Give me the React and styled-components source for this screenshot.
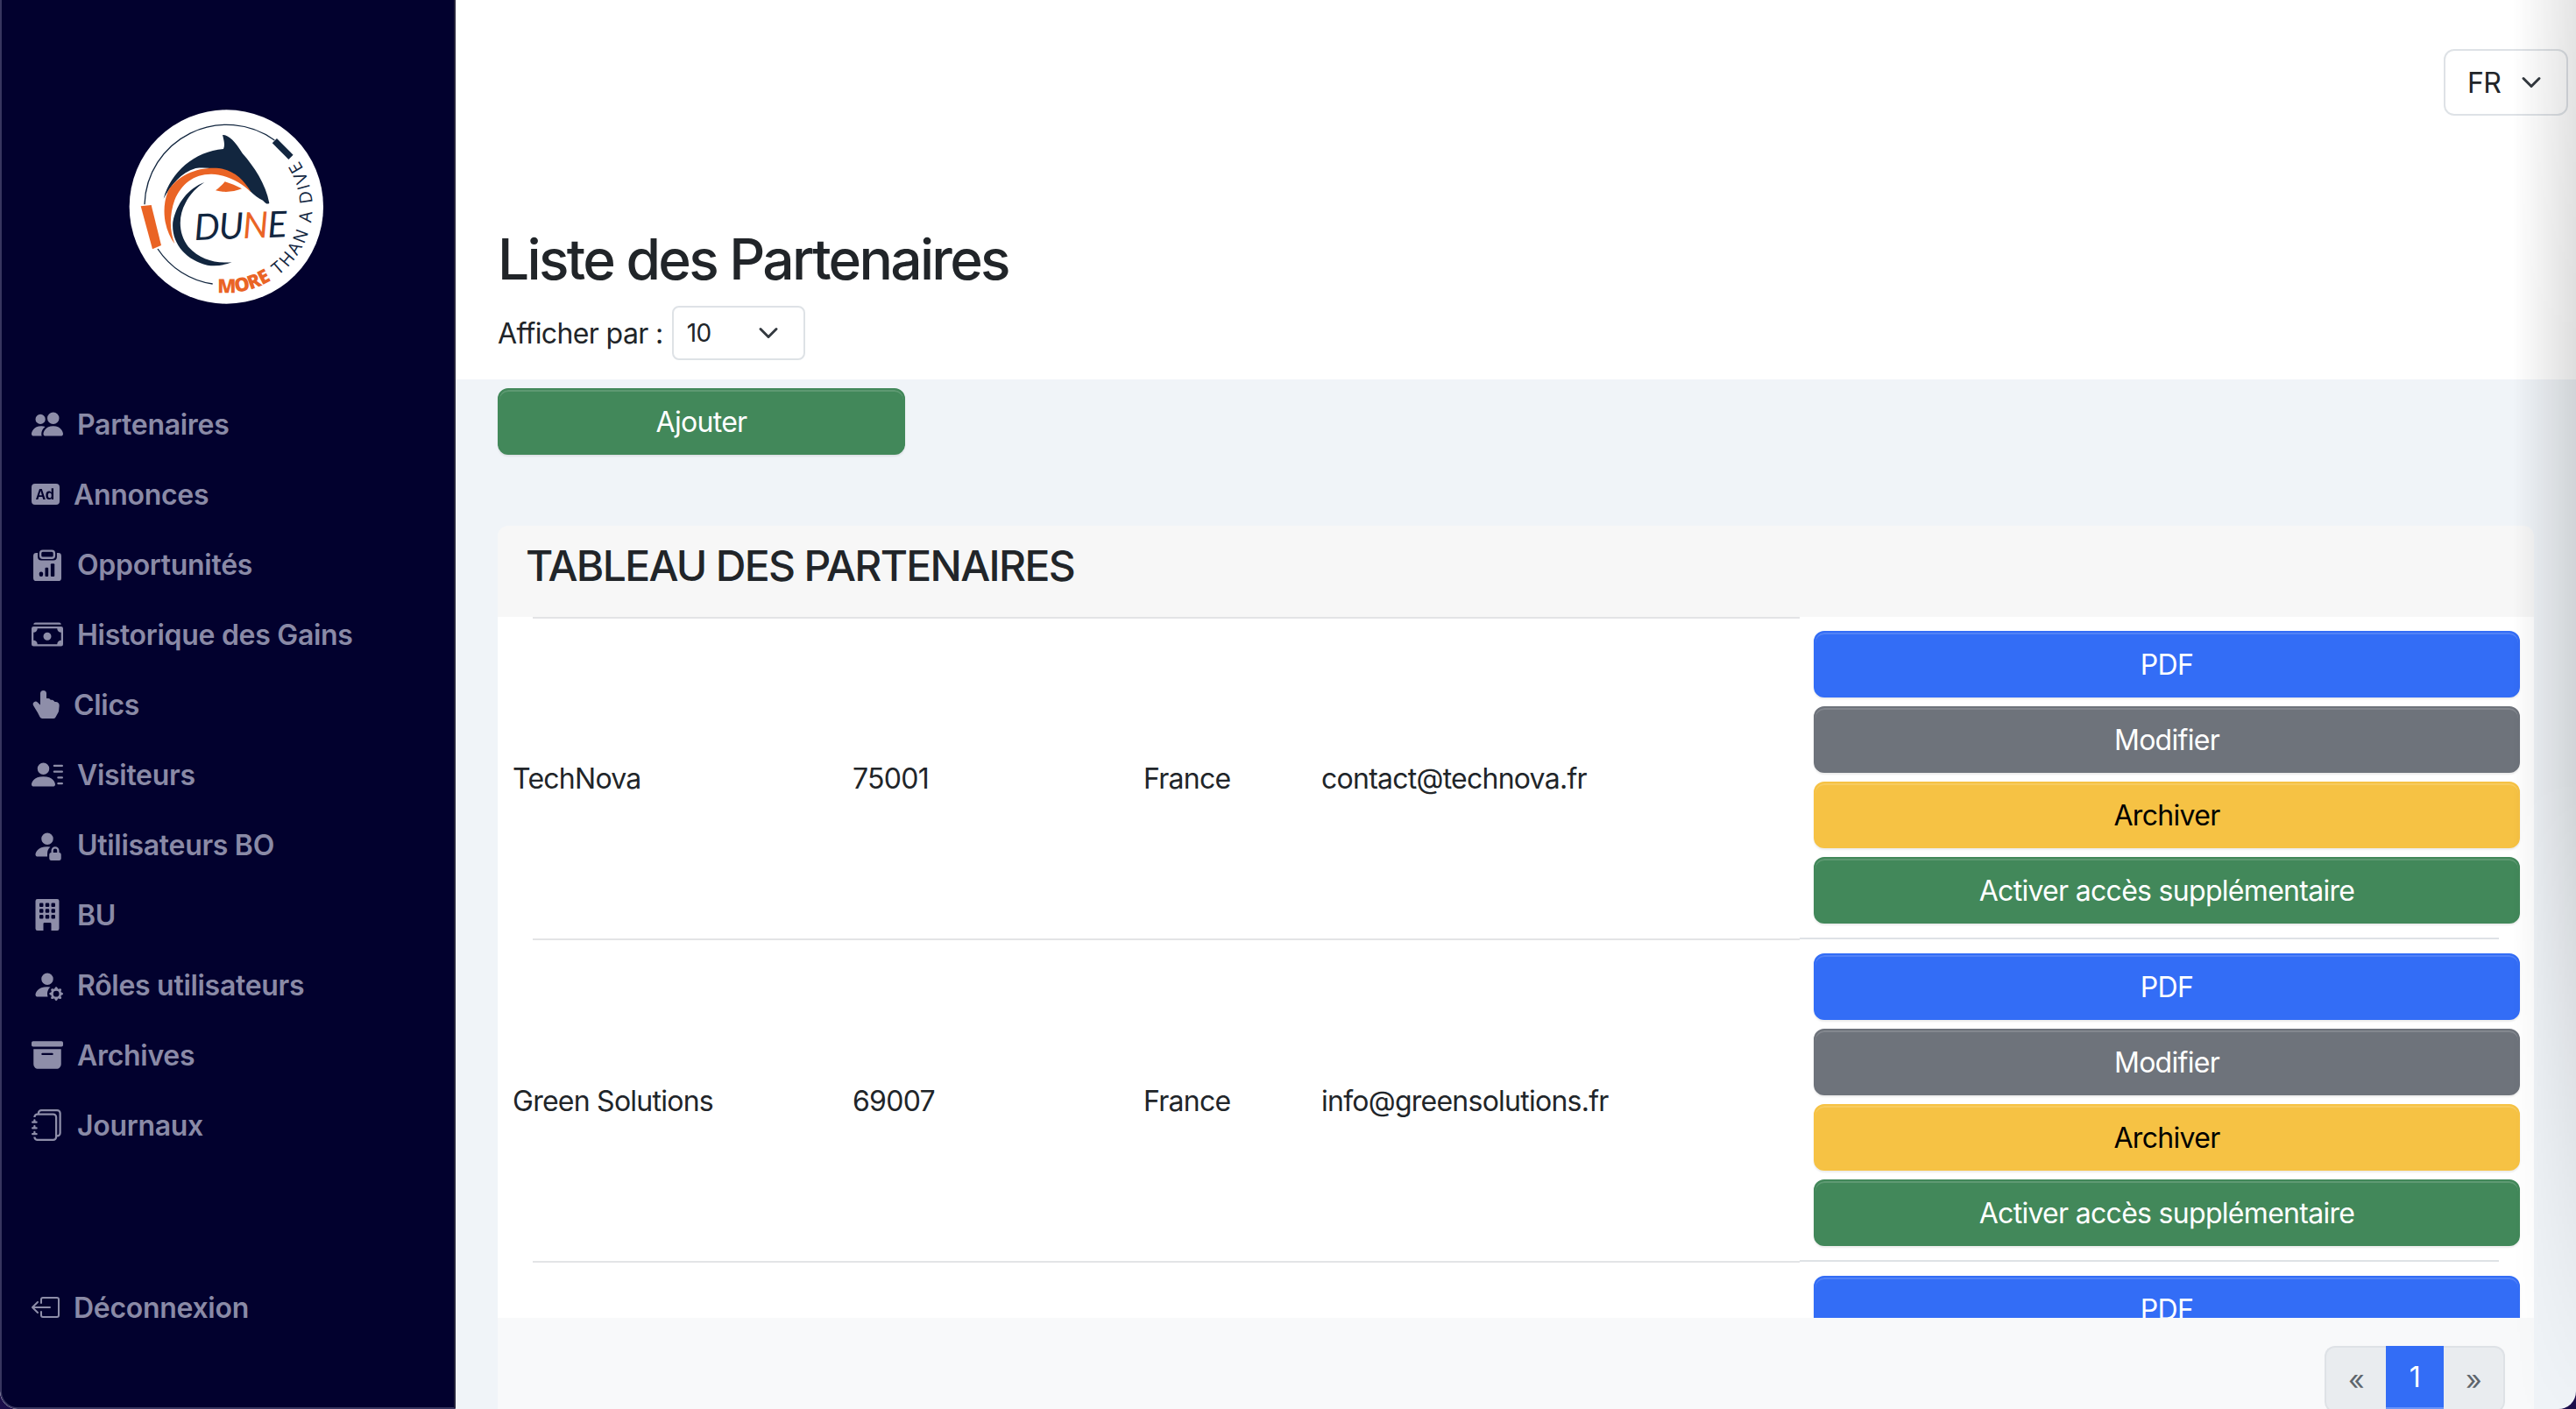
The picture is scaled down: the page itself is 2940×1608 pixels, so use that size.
import React from "react";
import styled, { createGlobalStyle } from "styled-components";
import {
  BsPeopleFill, BsBadgeAdFill, BsCashStack, BsHandIndexThumbFill,
  BsPersonLinesFill, BsPersonFillLock, BsBuildingFill, BsPersonFillGear, BsArchiveFill,
  BsJournals, BsBoxArrowLeft,
} from "react-icons/bs";

const Global = createGlobalStyle`
  html, body { margin: 0; padding: 0; background: #1b0d4a; }
  * { box-sizing: border-box; }
  body { font-family: Inter, "Liberation Sans", sans-serif; font-size: 32px; color: #212529; letter-spacing: -0.75px; }
`;

const Frame = styled.div`
  position: relative;
  display: flex;
  width: 2940px;
  height: 1608px;
  overflow: hidden;
  background: #f0f4f8;
  border-radius: 0 0 20px 20px;
`;
const Sidebar = styled.aside`
  flex: 0 0 520px;
  display: flex;
  flex-direction: column;
  padding: 90px 0 74px 34px;
  background: #02012e;
  border-left: 2px solid #37355f;
  border-right: 2px solid #25243c;
  border-bottom: 2px solid #37355f;
  border-bottom-left-radius: 20px;
`;
const Logo = styled.svg`
  display: block;
  width: 320px;
  height: 300px;
  margin: 0 0 54px 64px;
  flex: none;
`;
const Nav = styled.nav`
  display: flex;
  flex-direction: column;
`;
const NavItem = styled.a`
  display: flex;
  align-items: center;
  gap: 16px;
  height: 80px;
  color: #8a8aa6;
  font-weight: 600;
  font-size: 32px;
  letter-spacing: -0.3px;
`;
const Logout = styled(NavItem)`
  margin-top: auto;
`;
const IconBox = styled.span`
  display: flex;
  align-items: center;
  justify-content: center;
  flex: none;
  width: ${(p) => p.$w}px;
  color: #8e8ea9;
`;
const Main = styled.main`
  flex: 1;
  min-width: 0;
  display: flex;
  flex-direction: column;
`;
const Head = styled.header`
  flex: none;
  height: 433px;
  padding: 56px 9px 0 48px;
  background: #fff;
`;
const LangRow = styled.div`
  display: flex;
  justify-content: flex-end;
  height: 76px;
`;
const SelectBox = styled.div`
  display: flex;
  align-items: center;
  justify-content: space-between;
  width: ${(p) => p.$w}px;
  height: ${(p) => p.$h}px;
  padding: ${(p) => p.$pad};
  font-size: ${(p) => p.$fs}px;
  background: #fff;
  border: 2px solid #dee2e6;
  border-radius: ${(p) => p.$r}px;
`;
const Title = styled.h1`
  margin: 125px 0 15px;
  font-size: 64px;
  line-height: 77px;
  font-weight: 500;
  letter-spacing: -2.7px;
`;
const FilterRow = styled.div`
  display: flex;
  align-items: center;
  gap: 10px;
  height: 62px;
  letter-spacing: -0.62px;
`;
const Body = styled.div`
  flex: 1;
  min-height: 0;
  padding: 10px 48px 0;
`;
const Btn = styled.button`
  display: block;
  width: ${(p) => p.$w || "100%"};
  height: 76px;
  flex: none;
  padding: 0;
  font: 400 32px Inter, "Liberation Sans", sans-serif;
  letter-spacing: -0.7px;
  color: ${(p) => p.$fg || "#fff"};
  background: ${(p) => p.$bg};
  border: 2px solid ${(p) => p.$bg};
  border-radius: 12px;
  box-shadow: inset 0 2px 0 rgba(255, 255, 255, 0.15), 0 2px 2px rgba(0, 0, 0, 0.075);
`;
const Card = styled.section`
  margin-top: 81px;
  border-radius: 12px 12px 0 0;
  overflow: hidden;
`;
const CardHead = styled.div`
  display: flex;
  align-items: center;
  height: 104px;
  padding: 0 32px 12px;
  background: #f7f7f7;
`;
const CardTitle = styled.h2`
  margin: 0;
  font-size: 48px;
  font-weight: 500;
  line-height: 1.2;
  letter-spacing: -1.68px;
`;
const TableArea = styled.div`
  height: 800px;
  overflow: hidden;
  background: #fff;
`;
const Row = styled.div`
  display: grid;
  grid-template-columns: 388px 332px 203px 546px 838px;
  align-items: center;
  height: 366px;
  padding-left: 17px;
`;
const Cell = styled.div`
  white-space: nowrap;
  padding-top: 2px;
`;
const Actions = styled.div`
  display: flex;
  flex-direction: column;
  gap: 10px;
  padding: 0 16px;
`;
const Divider = styled.div`
  display: flex;
  height: 2px;
  margin-bottom: ${(p) => (p.$top ? "-2px" : 0)};
  padding-left: 40px;
  position: relative;
`;
const RuleLeft = styled.div`
  width: 1446px;
  height: 2px;
  margin-top: ${(p) => (p.$top ? 0 : 1)}px;
  background: #e3e4e6;
`;
const RuleRight = styled.div`
  width: 798px;
  height: 2px;
  background: #dee2e6;
`;
const CardFoot = styled.div`
  display: flex;
  justify-content: flex-end;
  height: 120px;
  padding: 32px 33px 0 0;
  background: #f8f9fa;
`;
const Pager = styled.div`
  display: flex;
  height: 76px;
  flex: none;
`;
const PageLink = styled.span`
  display: flex;
  align-items: center;
  justify-content: center;
  width: ${(p) => p.$w}px;
  background: ${(p) => (p.$active ? "#336df6" : "#e9ecef")};
  color: ${(p) => (p.$active ? "#fff" : "#5f666d")};
  border: 2px solid #dee2e6;
  border-width: ${(p) => p.$bw};
  border-radius: ${(p) => p.$r};
  ${(p) => p.$active && "border: 0; border-bottom: 6px solid #6b95f8;"}
`;
const EdgeShade = styled.div`
  position: absolute;
  top: 0;
  right: 0;
  bottom: 0;
  width: 72px;
  background: linear-gradient(to right, rgba(0, 0, 0, 0), rgba(0, 0, 0, 0.13));
  -webkit-mask-image: linear-gradient(to bottom, rgba(0,0,0,0.8) 0, #000 25%, #000 55%, rgba(0,0,0,0.05) 100%);
  mask-image: linear-gradient(to bottom, rgba(0,0,0,0.8) 0, #000 25%, #000 55%, rgba(0,0,0,0.05) 100%);
  pointer-events: none;
`;

const Chevron = () => (
  <svg width="32" height="24" viewBox="0 0 16 16" fill="none" stroke="#343a40" strokeWidth="2" strokeLinecap="round" strokeLinejoin="round">
    <path d="m2 5 6 6 6-6" />
  </svg>
);

const ClipboardBars = () => (
  <svg width="32" height="37" viewBox="115 555 95 110">
    <rect x="115" y="570" width="95" height="95" rx="10" fill="currentColor" />
    <rect x="130" y="555" width="65" height="40" rx="12" fill="#02012e" />
    <rect x="139" y="563" width="47" height="24" rx="8" fill="#02012e" stroke="currentColor" strokeWidth="7" />
    <rect x="135" y="634" width="13" height="16" rx="6" fill="#02012e" />
    <rect x="155" y="620" width="11" height="30" rx="3" fill="#02012e" />
    <rect x="174" y="606" width="13" height="44" rx="3" fill="#02012e" />
  </svg>
);

const DARK = "#12263f";
const ORANGE = "#ea6425";

const DuneLogo = () => (
  <Logo viewBox="0 0 960 900">
    <circle cx="475" cy="438" r="332" fill="#fff" />
    <path d="M195 430A281 281 0 0 1 640 210" fill="none" stroke={DARK} strokeWidth="4" />
    <path d="M640 212L696 268" fill="none" stroke={DARK} strokeWidth="22" />
    <path d="M182 436L218 432L252 570L222 583Z" fill={ORANGE} />
    <path d="M240 582A272 272 0 0 0 428 702" fill="none" stroke={DARK} strokeWidth="4" />
    <path d="M260 410C285 320 365 248 465 240C472 225 465 205 462 192C485 192 505 215 530 255C570 300 610 360 622 425C616 432 608 425 600 416C585 410 570 398 556 384C505 325 440 298 370 306C320 320 285 365 260 410Z" fill={DARK} />
    <path d="M298 565C265 520 250 450 275 385C310 325 385 300 450 306C500 312 535 345 560 388C525 355 480 328 425 326C365 325 320 360 298 415C280 465 280 520 298 565Z" fill={ORANGE} />
    <path d="M438 382C450 372 462 362 470 352C490 358 510 366 528 376C500 388 465 390 438 382Z" fill={ORANGE} />
    <path d="M400 354C345 375 305 425 292 490C285 560 335 620 410 638C440 642 470 638 494 628C440 632 385 620 345 575C310 530 310 470 335 425C350 395 375 370 400 354Z" fill={DARK} />
    <text x="366" y="552" fontFamily="Lato, sans-serif" fontStyle="italic" fontWeight="400" fontSize="124" letterSpacing="-3" fill={DARK} transform="rotate(-2 366 552)">
      DU<tspan fill={ORANGE}>N</tspan>E
    </text>
    <path id="moreArc" d="M445 731A294 294 0 0 0 650 675" fill="none" />
    <text fontFamily="'Open Sans', sans-serif" fontSize="66" fontWeight="800" fill={ORANGE} letterSpacing="-2">
      <textPath href="#moreArc">MORE</textPath>
    </text>
    <path id="diveArc" d="M652 673A294 294 0 0 0 715 268" fill="none" />
    <text fontFamily="'Open Sans', sans-serif" fontSize="60" fill={DARK} letterSpacing="8">
      <textPath href="#diveArc">THAN A DIVE</textPath>
    </text>
  </Logo>
);

const icon = (Icon, size) => <Icon size={size} />;

const navItems = [
  ["Partenaires", icon(BsPeopleFill, 36), 36],
  ["Annonces", icon(BsBadgeAdFill, 32), 32],
  ["Opportunités", <ClipboardBars />, 36],
  ["Historique des Gains", icon(BsCashStack, 36), 36],
  ["Clics", icon(BsHandIndexThumbFill, 36), 32],
  ["Visiteurs", icon(BsPersonLinesFill, 36), 36],
  ["Utilisateurs BO", icon(BsPersonFillLock, 36), 36],
  ["BU", icon(BsBuildingFill, 36), 36],
  ["Rôles utilisateurs", icon(BsPersonFillGear, 36), 36],
  ["Archives", icon(BsArchiveFill, 36), 36],
  ["Journaux", icon(BsJournals, 36), 36],
];

const rows = [
  ["TechNova", "75001", "France", "contact@technova.fr"],
  ["Green Solutions", "69007", "France", "info@greensolutions.fr"],
  ["", "", "", ""],
];

export default function App() {
  return (
    <>
      <Global />
      <Frame>
        <Sidebar>
          <DuneLogo />
          <Nav>
            {navItems.map(([label, glyph, w]) => (
              <NavItem key={label}>
                <IconBox $w={w}>{glyph}</IconBox>
                {label}
              </NavItem>
            ))}
          </Nav>
          <Logout>
            <IconBox $w={32}><BsBoxArrowLeft size={32} /></IconBox>
            Déconnexion
          </Logout>
        </Sidebar>
        <Main>
          <Head>
            <LangRow>
              <SelectBox $w={142} $h={76} $pad="0 24px 0 25px" $fs={32} $r={12}>
                FR
                <Chevron />
              </SelectBox>
            </LangRow>
            <Title>Liste des Partenaires</Title>
            <FilterRow>
              Afficher par :
              <SelectBox $w={152} $h={62} $pad="0 24px 0 15px" $fs={28} $r={8}>
                10
                <Chevron />
              </SelectBox>
            </FilterRow>
          </Head>
          <Body>
            <Btn $w="465px" $bg="#42885a">Ajouter</Btn>
            <Card>
              <CardHead>
                <CardTitle>TABLEAU DES PARTENAIRES</CardTitle>
              </CardHead>
              <TableArea>
                <Divider $top>
                  <RuleLeft $top />
                </Divider>
                {rows.map((r, i) => (
                  <React.Fragment key={i}>
                    <Row>
                      {r.map((c, j) => <Cell key={j}>{c}</Cell>)}
                      <Actions>
                        <Btn $bg="#336df6">PDF</Btn>
                        <Btn $bg="#6e737b">Modifier</Btn>
                        <Btn $bg="#f6c244" $fg="#000">Archiver</Btn>
                        <Btn $bg="#42885a">Activer accès supplémentaire</Btn>
                      </Actions>
                    </Row>
                    <Divider>
                      <RuleLeft />
                      <RuleRight />
                    </Divider>
                  </React.Fragment>
                ))}
              </TableArea>
              <CardFoot>
                <Pager>
                  <PageLink $w={70} $bw="2px 0 2px 2px" $r="12px 0 0 12px">«</PageLink>
                  <PageLink $w={66} $active>1</PageLink>
                  <PageLink $w={70} $bw="2px 2px 2px 0" $r="0 12px 12px 0">»</PageLink>
                </Pager>
              </CardFoot>
            </Card>
          </Body>
        </Main>
        <EdgeShade />
      </Frame>
    </>
  );
}
